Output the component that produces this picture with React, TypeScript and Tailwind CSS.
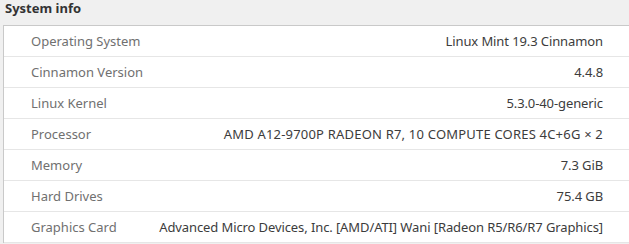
import React from 'react'

const rows = [
  { label: 'Operating System', value: 'Linux Mint 19.3 Cinnamon', fit: 'tracking-[-0.1px]' },
  { label: 'Cinnamon Version', value: '4.4.8', fit: 'tracking-[-0.1px]' },
  { label: 'Linux Kernel', value: '5.3.0-40-generic', fit: 'tracking-[-0.1px]' },
  { label: 'Processor', value: 'AMD A12-9700P RADEON R7, 10 COMPUTE CORES 4C+6G \u00d7 2', fit: 'tracking-[0.2px]' },
  { label: 'Memory', value: '7.3 GiB', fit: 'tracking-[-0.1px]' },
  { label: 'Hard Drives', value: '75.4 GB', fit: 'tracking-[-0.1px]' },
  { label: 'Graphics Card', value: 'Advanced Micro Devices, Inc. [AMD/ATI] Wani [Radeon R5/R6/R7 Graphics]', fit: 'tracking-[-0.1px]' },
]

const App = () => {
  return (
    <div
      className="w-[629px] h-[244px] overflow-hidden bg-[#f0f0f0] text-[13px]"
      style={{ fontFamily: '"Noto Sans", "Open Sans", sans-serif' }}
    >
      {/* Section title */}
      <div className="h-[25px] pl-[5px] font-bold text-[#333333] leading-[16px]">System info</div>

      {/* Info list */}
      <div className="ml-[3px] -mr-[4px] bg-white border-t border-l border-[#c9c9c9]">
        {rows.map((row) => (
          <div
            key={row.label}
            className="h-[31px] flex items-center justify-between pl-[27px] pr-[30px] pt-px border-b border-[#e6e6e6]"
          >
            <span className="text-[#707070] whitespace-nowrap">{row.label}</span>
            <span className={`text-[#3c3c3c] whitespace-nowrap ${row.fit}`}>{row.value}</span>
          </div>
        ))}
      </div>
    </div>
  )
}

export default App
